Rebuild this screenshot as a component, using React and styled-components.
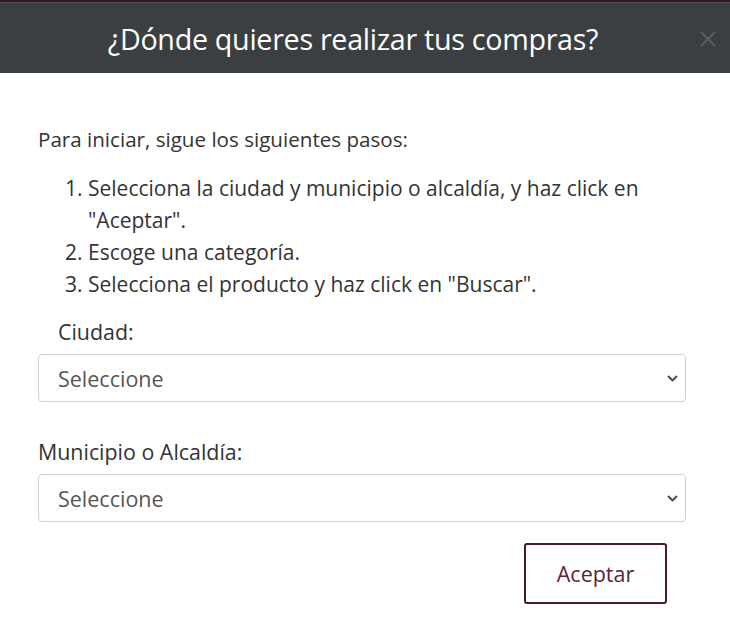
import React from 'react'
import styled, { createGlobalStyle } from 'styled-components'

const GlobalStyle = createGlobalStyle`
  * { box-sizing: border-box; }
  body {
    margin: 0;
    background: #fff;
    font-family: "Open Sans", "Liberation Sans", sans-serif;
    color: #333;
  }
`

const steps = [
  'Selecciona la ciudad y municipio o alcaldía, y haz click en "Aceptar".',
  'Escoge una categoría.',
  'Selecciona el producto y haz click en "Buscar".',
]

const Chevron = () => (
  <svg width="11" height="7" viewBox="0 0 11 7">
    <path d="M1 1 L5.5 5.5 L10 1" fill="none" stroke="#444" strokeWidth="1.8" />
  </svg>
)

const App = () => {
  return (
    <>
      <GlobalStyle />
      <Modal>
        <TopStrip />
        <Header>
          <Title>¿Dónde quieres realizar tus compras?</Title>
          <Close aria-label="Cerrar">
            <svg width="18" height="18" viewBox="0 0 18 18">
              <path d="M2 2 L16 16 M16 2 L2 16" stroke="#5b5e60" strokeWidth="2" />
            </svg>
          </Close>
        </Header>
        <Body>
          <Intro>Para iniciar, sigue los siguientes pasos:</Intro>
          <Steps>
            {steps.map((s, i) => (
              <li key={i}>{s}</li>
            ))}
          </Steps>
          <Label indent>Ciudad:</Label>
          <SelectWrap>
            <SelectBox>
              <option>Seleccione</option>
            </SelectBox>
            <Arrow><Chevron /></Arrow>
          </SelectWrap>
          <Label spaced>Municipio o Alcaldía:</Label>
          <SelectWrap>
            <SelectBox>
              <option>Seleccione</option>
            </SelectBox>
            <Arrow><Chevron /></Arrow>
          </SelectWrap>
          <Footer>
            <Button>Aceptar</Button>
          </Footer>
        </Body>
      </Modal>
    </>
  )
}

const Modal = styled.div`
  width: 730px;
  min-height: 633px;
  background: #fff;
`

const TopStrip = styled.div`
  height: 3px;
  background: #3a1426;
  border-bottom: 1px solid #4d4f51;
`

const Header = styled.div`
  position: relative;
  height: 70px;
  background: #3c3f41;
  display: flex;
  align-items: center;
  justify-content: center;
`

const Title = styled.h1`
  margin: 0;
  color: #fff;
  font-size: 28.7px;
  font-weight: 500;
  letter-spacing: -0.3px;
  transform: translateX(-12px);
`

const Close = styled.button`
  position: absolute;
  right: 13px;
  top: 27px;
  background: none;
  border: 0;
  padding: 0;
  width: 18px;
  height: 18px;
  display: flex;
`

const Body = styled.div`
  padding: 52px 44px 0 38px;
`

const Intro = styled.p`
  margin: 0;
  font-size: 20.6px;
  line-height: 28px;
  color: #333;
`

const Steps = styled.ol`
  margin: 19px 0 0;
  padding-left: 50px;
  font-size: 21px;
  line-height: 32px;
  color: #333;
`

const Label = styled.label`
  display: block;
  font-size: 21.4px;
  font-weight: 500;
  line-height: 28px;
  color: #333;
  margin-top: ${p => (p.spaced ? '36px' : '18px')};
  padding-left: ${p => (p.indent ? '20px' : '0')};
  margin-bottom: 8px;
`

const SelectWrap = styled.div`
  position: relative;
  width: 648px;
`

const SelectBox = styled.select`
  display: block;
  width: 100%;
  height: 48px;
  appearance: none;
  border: 1px solid #cfcfcf;
  border-radius: 4px;
  background: #fff;
  padding: 0 36px 0 19px;
  font-family: "Open Sans", "Liberation Sans", sans-serif;
  font-size: 21.5px;
  color: #555;
`

const Arrow = styled.span`
  position: absolute;
  right: 8px;
  top: 21px;
  display: flex;
  pointer-events: none;
`

const Footer = styled.div`
  display: flex;
  justify-content: flex-end;
  width: 648px;
  padding-right: 19px;
  margin-top: 21px;
`

const Button = styled.button`
  width: 143px;
  height: 61px;
  background: #fff;
  border: 2px solid #4b1a2d;
  border-radius: 3px;
  font-family: "Open Sans", "Liberation Sans", sans-serif;
  font-size: 21.5px;
  color: #5a2338;
`

export default App
